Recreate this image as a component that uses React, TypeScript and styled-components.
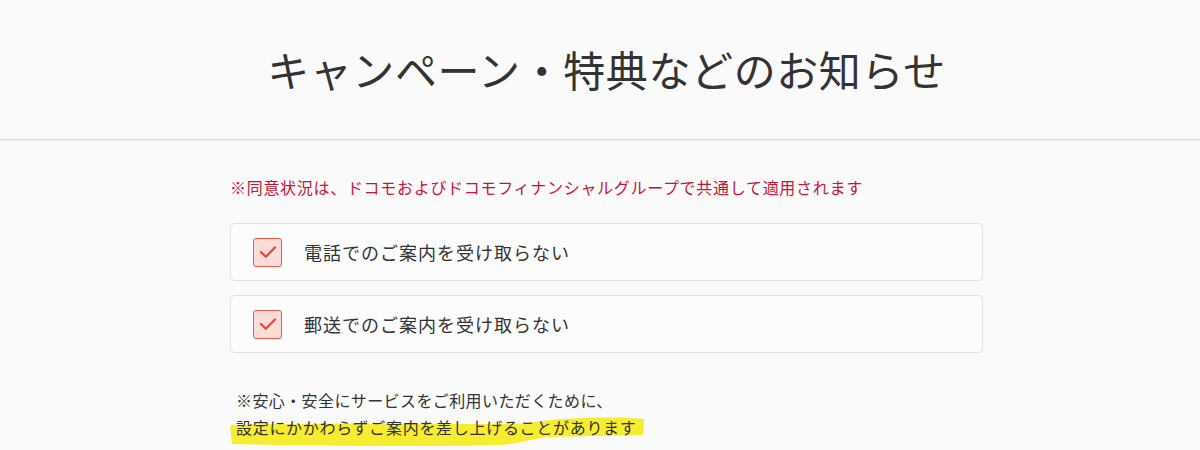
import styled, { createGlobalStyle } from 'styled-components';

const GlobalStyle = createGlobalStyle`
	html, body {
		margin: 0;
		padding: 0;
		background: #fafafa;
	}
	body {
		font-family: "Noto Sans CJK JP", "Noto Sans", sans-serif;
		color: #333;
	}
`;

const Page = styled.div`
	height: 450px;
	overflow: hidden;
`;

const Header = styled.header`
	height: 139px;
	display: flex;
	align-items: center;
	justify-content: center;
	padding-left: 13px;
	border-bottom: 1px solid #d9d9d9;
	box-shadow: 0 1px 0 #f0f0f0;
`;

const Title = styled.h1`
	margin: 0;
	padding-bottom: 2px;
	font-size: 42px;
	font-weight: 400;
	letter-spacing: 0.6px;
	color: #333;
`;

const Content = styled.main`
	width: 753px;
	margin-left: calc(50% - 370px);
	padding-top: 35px;
`;

const Notice = styled.p`
	margin: 0 0 24px;
	font-size: 16px;
	line-height: 24px;
	letter-spacing: 0.7px;
	color: #c8143c;
`;

const OptionList = styled.div`
	display: flex;
	flex-direction: column;
	gap: 14px;
`;

const Option = styled.label`
	display: flex;
	align-items: center;
	gap: 22px;
	height: 56px;
	padding: 0 22px;
	background: #fcfcfc;
	border: 1px solid #e2e2e2;
	border-radius: 4px;
	cursor: pointer;
`;

const Box = styled.span<{ $checked: boolean }>`
	flex-shrink: 0;
	width: 27px;
	height: 27px;
	display: flex;
	align-items: center;
	justify-content: center;
	border: 1.5px solid #e6584c;
	border-radius: 3px;
	background: ${p => (p.$checked ? '#fcdcd6' : '#fff')};
`;

const OptionLabel = styled.span`
	font-size: 18px;
	letter-spacing: 1px;
	color: #333;
`;

const Footnote = styled.div`
	margin-top: 34px;
	padding-left: 6px;
	font-size: 16px;
	line-height: 27px;
	letter-spacing: 0.4px;
	color: #333;
`;

const Marked = styled.span`
	position: relative;
	display: inline-block;
	letter-spacing: 0.7px;
`;

const MarkText = styled.span`
	position: relative;
`;

const Stroke = styled.svg`
	position: absolute;
	left: -7px;
	top: 2px;
	width: 416px;
	height: 31px;
`;

function Check() {
	return (
		<svg width="18" height="14" viewBox="0 0 18 14">
			<path d="M2 7 L6.8 11.8 L16 2.5" fill="none" stroke="#e6463c" strokeWidth="2.2" strokeLinecap="round" strokeLinejoin="round" />
		</svg>
	);
}

const options = ['電話でのご案内を受け取らない', '郵送でのご案内を受け取らない'];

export default function App() {
	return (
		<Page>
			<GlobalStyle />
			<Header>
				<Title>キャンペーン・特典などのお知らせ</Title>
			</Header>
			<Content>
				<Notice>※同意状況は、ドコモおよびドコモフィナンシャルグループで共通して適用されます</Notice>
				<OptionList>
					{options.map(o => (
						<Option key={o}>
							<Box $checked>
								<Check />
							</Box>
							<OptionLabel>{o}</OptionLabel>
						</Option>
					))}
				</OptionList>
				<Footnote>
					※安心・安全にサービスをご利用いただくために、
					<br />
					<Marked>
						<Stroke viewBox="0 0 416 31" preserveAspectRatio="none">
							<path
								d="M1 9 C60 7 200 8 285 8 C310 6 330 2 360 2 C385 1 405 2 415 3 L414 19 C380 20 350 20 320 21 C300 23 290 28 270 29 C200 31 80 30 3 28 Z"
								fill="#f5ea1a"
								opacity="0.9"
							/>
						</Stroke>
						<MarkText>設定にかかわらずご案内を差し上げることがあります</MarkText>
					</Marked>
				</Footnote>
			</Content>
		</Page>
	);
}
